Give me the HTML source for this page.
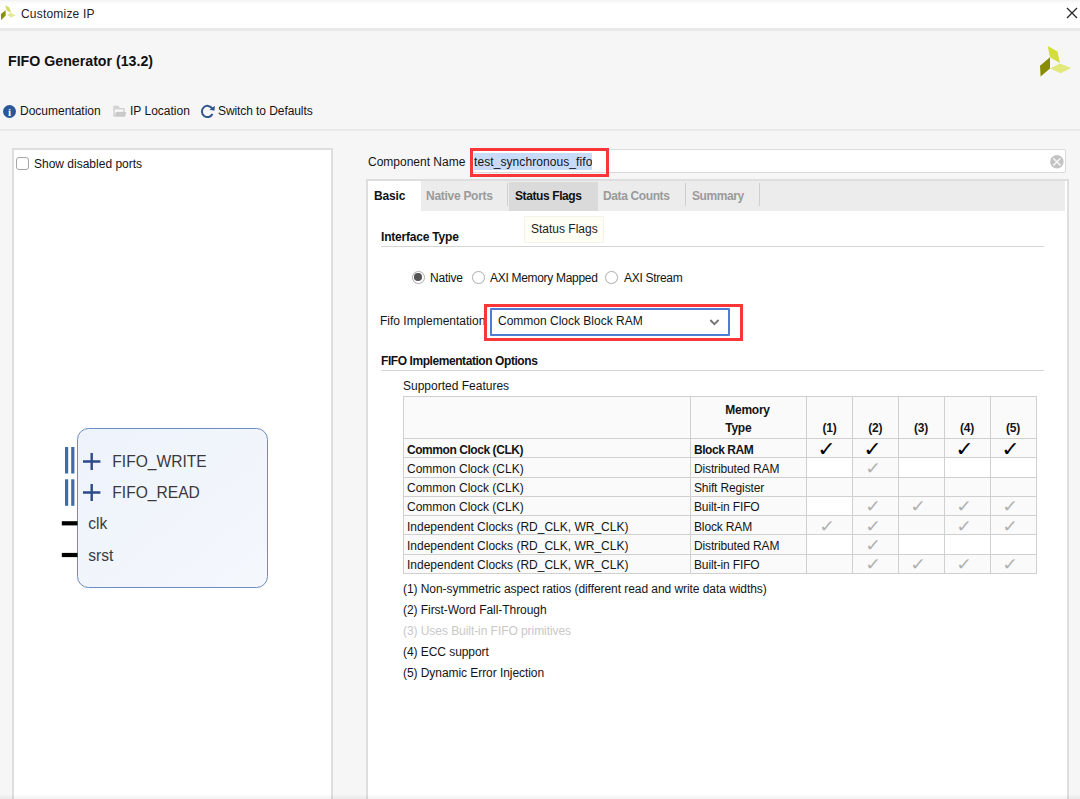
<!DOCTYPE html>
<html lang="en">
<head>
<meta charset="utf-8">
<title>Customize IP</title>
<style>
html,body{margin:0;padding:0;}
body{width:1080px;height:799px;overflow:hidden;background:#f6f6f6;position:relative;
  font-family:"Liberation Sans",Arial,sans-serif;font-size:12px;color:#141414;}
.abs{position:absolute;white-space:nowrap;}
.t{position:absolute;white-space:nowrap;line-height:14px;height:14px;}
.b{font-weight:bold;}
#titlebar{left:0;top:0;width:1080px;height:28px;background:#fff;border-bottom:3px solid #e9e9e9;
  background-image:linear-gradient(to bottom,#f3f3f3 0,#fafafa 2px,#fff 5px);background-repeat:no-repeat;}
#sep1{left:0;top:129px;width:1080px;height:2px;background:#e9e9e9;}
#leftpanel{left:12px;top:148px;width:317px;height:700px;background:#fff;border:2px solid #dedede;}
#rightpanel{left:366px;top:179px;width:699px;height:700px;background:#fff;border:2px solid #dedede;}
#tabstrip{left:368px;top:181px;width:697px;height:30px;background:#ececec;}
#tab-basic{left:368px;top:181px;width:53px;height:30px;background:#fff;}
#tab-status{left:508.5px;top:182px;width:89px;height:29px;background:#dadada;}
.tabsep{width:1px;height:23px;top:183px;background:#cfcfcf;}
.tab{color:#9a9a9a;font-weight:bold;}
#input{left:470px;top:149px;width:594px;height:22.4px;background:#fff;border:1.5px solid #dadada;border-radius:2px;}
.redbox{border:3px solid #f93638;box-sizing:border-box;}
.hl{background:#c8dcfa;display:inline-block;height:17px;line-height:19px;overflow:hidden;vertical-align:top;}
.hr{height:1px;background:#d5d5d5;}
.radio{width:11px;height:11px;border:1.5px solid #b4b4b4;border-radius:50%;background:#fff;box-shadow:0 0 1px #d8d8d8;}
.radio.on:after{content:"";position:absolute;left:1.75px;top:1.75px;width:7.5px;height:7.5px;border-radius:50%;background:#555;}
#select{left:490px;top:307.75px;width:236px;height:24px;background:#fff;border:2px solid #4f7dd3;border-radius:1px;}
#tooltip{left:524px;top:216px;width:80px;height:27px;background:#fefef4;border:1px solid #f3f3ec;box-sizing:border-box;}
table{position:absolute;left:403px;top:396px;border-collapse:collapse;table-layout:fixed;width:633px;background:#fafafa;}
td{border:1px solid #d0d0d0;padding:3.6px 0 0 3px;height:14.7px;line-height:14px;font-size:12px;overflow:hidden;white-space:nowrap;vertical-align:top;letter-spacing:-0.14px;}
tr.h td{height:41px;vertical-align:bottom;font-weight:bold;text-align:center;padding:0;line-height:18px;letter-spacing:-0.25px;}
tr.h td span{display:inline-block;text-align:left;position:relative;top:-1px;}
tr.h td:nth-child(2) span{left:-1px;}
tr.b td{letter-spacing:-0.44px;}
td:first-child{letter-spacing:0;}
tr.b td:first-child{letter-spacing:-0.44px;}
td.c{text-align:center;padding:0;height:18.3px;position:relative;letter-spacing:0;}
td.k,td.g{font-family:"DejaVu Sans",sans-serif;}
td.k{font-size:20.5px;line-height:18px;color:#000;}
td.k i,td.g i{font-style:normal;display:inline-block;position:relative;}
td.k i{left:-3px;top:1px;transform:scaleX(1.08);}
td.g i{left:-2.5px;top:0.5px;transform:scaleX(1.1);}
td.g{font-size:17px;line-height:18px;color:#b0b0b0;}
td.w{background:#fff;}
.note{left:403px;letter-spacing:-0.06px;margin-top:0px;}
.dis{color:#c8c8c8;}
</style>
</head>
<body>

<!-- title bar -->
<div class="abs" id="titlebar"></div>
<svg class="abs" style="left:0;top:0" width="18" height="24" viewBox="0 0 18 24">
  <polygon points="5.1,5.1 9.3,7.4 11.1,13 6.9,10.6" fill="#d2da5a"/>
  <polygon points="0.9,13.9 5.6,10.2 5.6,15.7 1.1,19.9" fill="#8a8f10"/>
  <polygon points="6.9,14.8 11.1,13 15.7,15.3 11.1,17.6" fill="#e3e996"/>
</svg>
<div class="t" style="left:21px;top:7px;font-size:12px;letter-spacing:0.2px;color:#222;">Customize IP</div>
<svg class="abs" style="left:1065px;top:6px" width="14" height="14" viewBox="0 0 14 14">
  <path d="M2 2 L12 12 M12 2 L2 12" stroke="#222" stroke-width="1.2" fill="none"/>
</svg>

<!-- header -->
<div class="t b" style="left:8px;top:54px;font-size:14.2px;color:#111;">FIFO Generator (13.2)</div>
<svg class="abs" style="left:1039px;top:45px" width="33" height="33" viewBox="1039 45 33 33">
  <polygon points="1047.7,46 1057.5,51.6 1059.9,62.9 1050,57.3" fill="#d3de38"/>
  <polygon points="1040,65.7 1050,57.3 1050,68.5 1040.6,76.6" fill="#888d00"/>
  <polygon points="1050,68.5 1059.9,63.5 1071,68 1060.7,73.2" fill="#e2e97a"/>
</svg>

<!-- toolbar -->
<svg class="abs" style="left:2px;top:104px" width="15" height="15" viewBox="0 0 15 15">
  <circle cx="7.5" cy="7.5" r="6.5" fill="#2b5797"/>
  <text x="7.5" y="11.5" font-family="Liberation Serif,serif" font-weight="bold" font-size="11" fill="#fff" text-anchor="middle">i</text>
</svg>
<div class="t" style="left:20px;top:104px;">Documentation</div>
<svg class="abs" style="left:112px;top:104px" width="16" height="14" viewBox="0 0 16 14">
  <path d="M1.2 1.8 h5.4 l1.2 2.2 h4.9 v4 h-8.2 l-1.4 4.4 h-1.9 z" fill="#d3d3d3"/>
  <path d="M2.8 5.4 h8.4 v2.3 h-7.4 l-1 3.2 z" fill="#fafafa"/>
  <polygon points="4.3,7.9 14.3,7.9 12.9,12.7 3,12.7" fill="#c9c9c9"/>
</svg>
<div class="t" style="left:130px;top:104px;">IP Location</div>
<svg class="abs" style="left:200px;top:104px" width="16" height="15" viewBox="0 0 16 15">
  <path d="M12.2 4.4 A5.6 5.6 0 1 0 12.5 10" stroke="#31548f" stroke-width="2" fill="none"/>
  <polygon points="9.6,5.7 14.9,1.8 14.4,6.7" fill="#31548f"/>
</svg>
<div class="t" style="left:218px;top:104px;letter-spacing:-0.08px;">Switch to Defaults</div>
<div class="abs" id="sep1"></div>

<!-- left panel -->
<div class="abs" id="leftpanel"></div>
<div class="abs" style="left:15.5px;top:156.5px;width:11px;height:11px;border:1.5px solid #a6a6a6;border-radius:3px;background:#fff;"></div>
<div class="t" style="left:34px;top:157px;">Show disabled ports</div>

<svg class="abs" style="left:55px;top:420px" width="225" height="175" viewBox="55 420 225 175">
  <defs>
    <linearGradient id="bx" x1="0" y1="0" x2="1" y2="1">
      <stop offset="0" stop-color="#eef3fb"/><stop offset="1" stop-color="#f4f7fc"/>
    </linearGradient>
  </defs>
  <rect x="77.5" y="428.5" width="190" height="159" rx="11" ry="11" fill="url(#bx)" stroke="#6d8cc8" stroke-width="1"/>
  <g fill="#3b6ea8">
    <rect x="65" y="447" width="3.2" height="26.5"/><rect x="71.2" y="447" width="3.2" height="26.5"/>
    <rect x="65" y="479.3" width="3.2" height="26.5"/><rect x="71.2" y="479.3" width="3.2" height="26.5"/>
  </g>
  <g stroke="#2b4a8c" stroke-width="2.4" fill="none">
    <path d="M83 461.5 H100.4 M91.7 453 V470"/>
    <path d="M83 492.5 H100.4 M91.7 484 V501"/>
  </g>
  <g fill="#000">
    <rect x="61.8" y="521.2" width="15.7" height="4.2"/>
    <rect x="61.8" y="552.9" width="15.7" height="4.2"/>
  </g>
  <g font-family="Liberation Sans,Arial,sans-serif" font-size="15.6" fill="#3a3a3a">
    <text x="112.3" y="466.5">FIFO_WRITE</text>
    <text x="112.3" y="498.2">FIFO_READ</text>
    <text x="88.3" y="529.2">clk</text>
    <text x="88.3" y="561">srst</text>
  </g>
</svg>

<!-- right: component name -->
<div class="t" style="left:368px;top:155px;">Component Name</div>
<div class="abs" id="input"></div>
<div class="t" style="left:474px;top:152.5px;height:17px;line-height:17px;letter-spacing:0.08px;"><span class="hl">test_synchronous_fifo</span></div>
<div class="abs redbox" style="left:470px;top:148px;width:139px;height:29px;"></div>
<svg class="abs" style="left:1050px;top:155px" width="14" height="14" viewBox="0 0 14 14">
  <circle cx="6.9" cy="6.8" r="6.8" fill="#c3c3c3"/>
  <path d="M3.3 3.2 L10.5 10.4 M10.5 3.2 L3.3 10.4" stroke="#f4f4f4" stroke-width="1.5" fill="none"/>
</svg>

<!-- tab panel -->
<div class="abs" id="rightpanel"></div>
<div class="abs" id="tabstrip"></div>
<div class="abs" id="tab-basic"></div>
<div class="abs" id="tab-status"></div>
<div class="abs tabsep" style="left:507px;"></div>
<div class="abs tabsep" style="left:685px;"></div>
<div class="abs tabsep" style="left:759px;"></div>
<div class="t b" style="left:374px;top:189px;color:#111;letter-spacing:-0.15px;">Basic</div>
<div class="t tab" style="left:426px;top:189px;letter-spacing:-0.28px;">Native Ports</div>
<div class="t b" style="left:515px;top:189px;color:#111;letter-spacing:-0.4px;">Status Flags</div>
<div class="t tab" style="left:603px;top:189px;letter-spacing:-0.38px;">Data Counts</div>
<div class="t tab" style="left:692px;top:189px;letter-spacing:-0.4px;">Summary</div>

<div class="abs" id="tooltip"></div>
<div class="t" style="left:531px;top:222px;color:#222;">Status Flags</div>

<div class="t b" style="left:381px;top:230px;color:#111;letter-spacing:-0.2px;">Interface Type</div>
<div class="abs hr" style="left:381px;top:246px;width:663px;"></div>

<div class="abs radio on" style="left:411.5px;top:270.5px;"></div>
<div class="t" style="left:430px;top:271px;letter-spacing:-0.2px;">Native</div>
<div class="abs radio" style="left:471.5px;top:270.5px;"></div>
<div class="t" style="left:490px;top:271px;letter-spacing:-0.3px;">AXI Memory Mapped</div>
<div class="abs radio" style="left:605px;top:270.5px;"></div>
<div class="t" style="left:624px;top:271px;letter-spacing:-0.3px;">AXI Stream</div>

<div class="t" style="left:380px;top:314px;">Fifo Implementation</div>
<div class="abs" id="select"></div>
<div class="t" style="left:498px;top:314px;">Common Clock Block RAM</div>
<svg class="abs" style="left:708px;top:316px" width="14" height="12" viewBox="0 0 14 12">
  <path d="M2.3 4 L6.4 8.2 L10.6 4" stroke="#767676" stroke-width="1.9" fill="none"/>
</svg>
<div class="abs redbox" style="left:484px;top:303.5px;width:259px;height:37.5px;"></div>

<div class="t b" style="left:381px;top:354px;color:#111;letter-spacing:-0.43px;">FIFO Implementation Options</div>
<div class="abs hr" style="left:381px;top:370px;width:663px;"></div>
<div class="t" style="left:403px;top:379px;">Supported Features</div>

<table>
<colgroup><col style="width:287px"><col style="width:116px"><col style="width:46px"><col style="width:45.5px"><col style="width:46px"><col style="width:46px"><col style="width:46px"></colgroup>
<tr class="h"><td></td><td><span>Memory<br>Type</span></td><td><span>(1)</span></td><td><span>(2)</span></td><td><span>(3)</span></td><td><span>(4)</span></td><td><span>(5)</span></td></tr>
<tr class="b"><td>Common Clock (CLK)</td><td>Block RAM</td><td class="c k"><i>✓</i></td><td class="c k"><i>✓</i></td><td class="c"></td><td class="c k"><i>✓</i></td><td class="c k"><i>✓</i></td></tr>
<tr><td>Common Clock (CLK)</td><td>Distributed RAM</td><td class="c w"></td><td class="c g"><i>✓</i></td><td class="c w"></td><td class="c w"></td><td class="c w"></td></tr>
<tr><td>Common Clock (CLK)</td><td>Shift Register</td><td class="c"></td><td class="c"></td><td class="c"></td><td class="c"></td><td class="c"></td></tr>
<tr><td>Common Clock (CLK)</td><td>Built-in FIFO</td><td class="c w"></td><td class="c g"><i>✓</i></td><td class="c g"><i>✓</i></td><td class="c g"><i>✓</i></td><td class="c g"><i>✓</i></td></tr>
<tr><td>Independent Clocks (RD_CLK, WR_CLK)</td><td>Block RAM</td><td class="c g"><i>✓</i></td><td class="c g"><i>✓</i></td><td class="c"></td><td class="c g"><i>✓</i></td><td class="c g"><i>✓</i></td></tr>
<tr><td>Independent Clocks (RD_CLK, WR_CLK)</td><td>Distributed RAM</td><td class="c w"></td><td class="c g"><i>✓</i></td><td class="c w"></td><td class="c w"></td><td class="c w"></td></tr>
<tr><td>Independent Clocks (RD_CLK, WR_CLK)</td><td>Built-in FIFO</td><td class="c"></td><td class="c g"><i>✓</i></td><td class="c g"><i>✓</i></td><td class="c g"><i>✓</i></td><td class="c g"><i>✓</i></td></tr>
</table>

<div class="t note" style="top:582px;">(1) Non-symmetric aspect ratios (different read and write data widths)</div>
<div class="t note" style="top:603px;">(2) First-Word Fall-Through</div>
<div class="t note dis" style="top:624px;">(3) Uses Built-in FIFO primitives</div>
<div class="t note" style="top:645px;">(4) ECC support</div>
<div class="t note" style="top:666px;">(5) Dynamic Error Injection</div>

<div class="abs" style="left:0;top:794px;width:1080px;height:5px;background:linear-gradient(to bottom,rgba(0,0,0,0),rgba(0,0,0,0.05));"></div>
</body>
</html>
